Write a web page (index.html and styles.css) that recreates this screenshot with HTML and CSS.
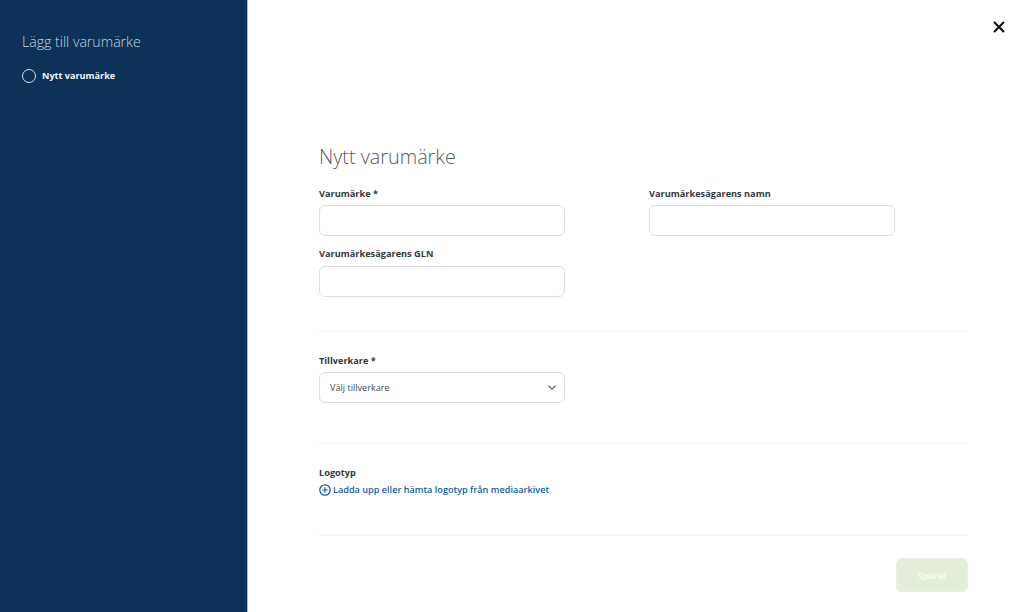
FILE: index.html
```html
<!DOCTYPE html>
<html lang="sv">
<head>
<meta charset="utf-8">
<title>Lägg till varumärke</title>
<link rel="stylesheet" href="styles.css">
</head>
<body>
<div class="app">
  <aside class="sidebar">
    <h2 class="side-title">Lägg till varumärke</h2>
    <div class="step"><span class="step-dot"></span><span class="step-label">Nytt varumärke</span></div>
  </aside>
  <main class="main">
    <div class="topbar">
      <svg class="close" width="12" height="12" viewBox="0 0 12 12"><path d="M1 1L11 11M11 1L1 11" fill="none" stroke="#111" stroke-width="2.2"/></svg>
    </div>
    <form class="form">
      <h1 class="title">Nytt varumärke</h1>
      <section class="grid">
        <div class="field"><label class="label">Varumärke *</label><div class="input"></div></div>
        <div class="field"><label class="label">Varumärkesägarens namn</label><div class="input"></div></div>
        <div class="field"><label class="label">Varumärkesägarens GLN</label><div class="input"></div></div>
      </section>
      <hr class="rule rule-a">
      <section class="field maker">
        <label class="label">Tillverkare *</label>
        <div class="input select"><span>Välj tillverkare</span>
          <svg width="8" height="5" viewBox="0 0 8 5"><path d="M0.5 0.6L4 4.1L7.5 0.6" fill="none" stroke="#4a5a68" stroke-width="1.1"/></svg>
        </div>
      </section>
      <hr class="rule rule-b">
      <section class="logo">
        <label class="label">Logotyp</label>
        <a class="upload">
          <svg width="12" height="12" viewBox="0 0 12 12"><circle cx="6" cy="6" r="5.2" fill="none" stroke="#0f5f9e" stroke-width="1.3"/><path d="M6 3.2V8.8M3.2 6H8.8" fill="none" stroke="#0f5f9e" stroke-width="1.2"/></svg>
          <span>Ladda upp eller hämta logotyp från mediaarkivet</span>
        </a>
      </section>
      <hr class="rule rule-c">
      <div class="actions"><button type="button" class="save">Spara!</button></div>
    </form>
  </main>
</div>
</body>
</html>
```
FILE: styles.css
```css
* { box-sizing: border-box; }
html, body { margin: 0; height: 100%; overflow: hidden; }
body { font-family: "Open Sans", sans-serif; background: #fff; }
.app { display: flex; width: 1024px; height: 612px; }
.sidebar { width: 248px; flex: none; background: #0c3357; border-right: 1px solid #a9bccd; padding: 31px 22px 0; }
.side-title { margin: 0 0 17px; font-size: 14.1px; line-height: 21px; font-weight: 300; color: #c9d5df; }
.step { display: flex; align-items: center; gap: 6px; }
.step-dot { width: 14px; height: 14px; border: 1px solid #d5dfe7; border-radius: 50%; }
.step-label { font-size: 9.1px; line-height: 14px; font-weight: 700; color: #f2f5f8; }
.main { flex: 1; display: flex; flex-direction: column; padding: 21px 19px 0 71px; }
.topbar { display: flex; justify-content: flex-end; height: 12px; }
.close { display: block; }
.form { width: 649px; margin-top: 110px; }
.title { margin: 0 0 15px; font-size: 19.8px; line-height: 28px; font-weight: 300; color: #555b60; }
.grid { display: grid; grid-template-columns: 246px 246px; column-gap: 84px; row-gap: 11px; }
.field { display: flex; flex-direction: column; }
.label { font-size: 9.2px; line-height: 14px; font-weight: 700; color: #33383c; margin-bottom: 5px; }
.grid .field:nth-child(-n+2) .label { line-height: 15px; margin-bottom: 4px; }
.maker .label { margin-bottom: 4px; }
.input { width: 246px; height: 31px; border: 1px solid #dcdde6; border-radius: 6px; background: #fff; }
.select { display: flex; align-items: center; justify-content: space-between; padding: 0 8px 0 10px; font-size: 9.1px; color: #444a4f; }
.rule { margin: 0; border: 0; border-top: 1px solid #f2f2f4; }
.rule-a { margin-top: 34px; margin-bottom: 22px; }
.rule-b { margin-top: 40px; margin-bottom: 22px; }
.rule-c { margin-top: 38px; margin-bottom: 22px; }
.logo { display: flex; flex-direction: column; }
.logo .label { margin-bottom: 3px; }
.upload { display: flex; align-items: center; gap: 2px; font-size: 9.15px; line-height: 14px; font-weight: 600; color: #0f5f9e; }
.actions { display: flex; justify-content: flex-end; }
.save { width: 72px; height: 34px; border: 1px solid #e8f1e2; border-radius: 6px; background: #e2efd8; color: #fbfdf9; font-family: "Open Sans", sans-serif; font-size: 9.3px; font-weight: 600; padding: 0; }
```
